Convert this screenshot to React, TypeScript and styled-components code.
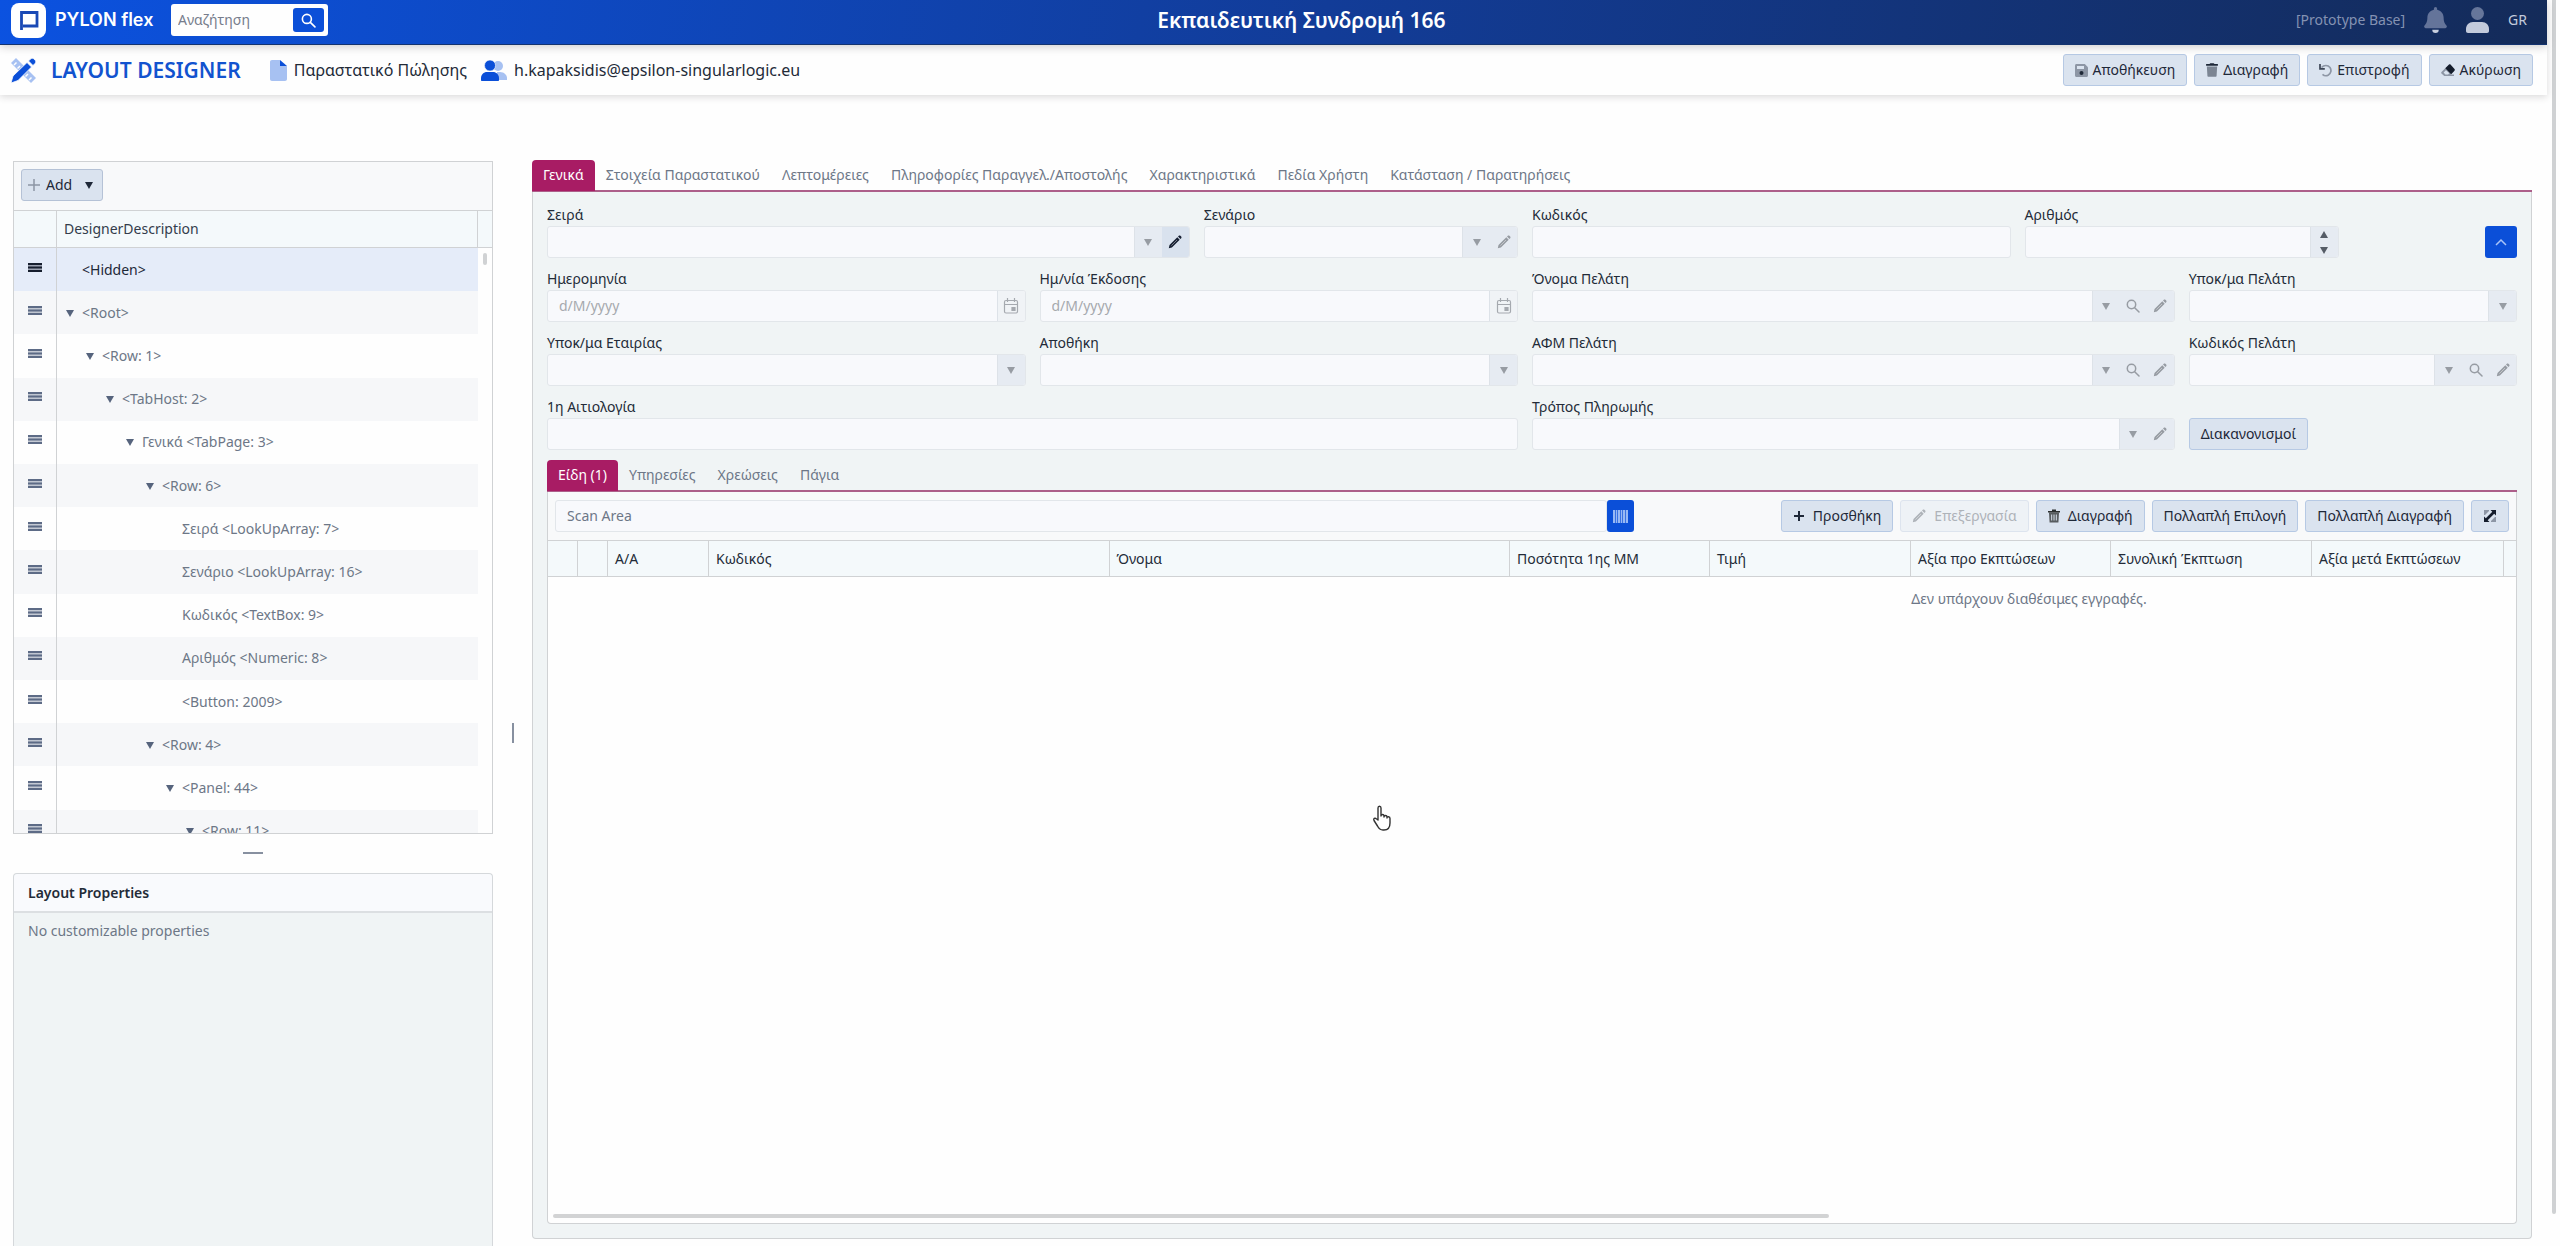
import React from "react";
import styled, { createGlobalStyle, css } from "styled-components";

const GlobalStyle = createGlobalStyle`
  *, *::before, *::after { box-sizing: border-box; }
  body {
    margin: 0;
    background: #fefefe;
    color: #232b38;
    font: 400 14px/20px "Noto Sans", "Open Sans", sans-serif;
    overflow: hidden;
  }
  button, input { font: inherit; color: inherit; }
  h1, h2, p { margin: 0; }
  svg { display: block; flex: none; }
`;

/* ---------- page frame ---------- */

const Page = styled.div`
  display: flex;
  height: 100vh;
`;

const Content = styled.div`
  flex: 1;
  min-width: 0;
  display: flex;
  flex-direction: column;
`;

const ScrollRail = styled.div`
  width: 13px;
  padding: 0 4px 32px 5px;
`;

const ScrollThumb = styled.div`
  height: 100%;
  border-radius: 0 0 2px 2px;
  background: #cfd1d3;
`;

const TopBar = styled.header`
  position: relative;
  z-index: 2;
  display: grid;
  grid-template-columns: 53fr auto 50fr;
  align-items: center;
  height: 45px;
  padding: 0 20px 4px 11px;
  border-bottom: 1px solid #14336f;
  background: linear-gradient(100deg, #0b52e0 0%, #123c98 52%, #142b59 100%);
  box-shadow: 0 2px 8px rgba(40, 30, 40, 0.22);
  color: #fff;
`;

const BarGroup = styled.div<{ $gap: number; $end?: boolean }>`
  display: flex;
  align-items: center;
  gap: ${(p) => p.$gap}px;
  justify-content: ${(p) => (p.$end ? "flex-end" : "flex-start")};
`;

const Brand = styled.a`
  display: flex;
  align-items: center;
  gap: 9px;
  width: 147px;
  color: #fff;
  font: 600 18px/24px Inter, sans-serif;
  text-decoration: none;
  white-space: nowrap;
`;

const SearchBox = styled.form`
  display: flex;
  align-items: center;
  width: 157px;
  height: 32px;
  padding: 0 4px 0 7px;
  border-radius: 3px;
  background: #fefefe;

  input {
    flex: 1;
    min-width: 0;
    padding: 0;
    border: 0;
    background: none;
    color: #232b38;
    outline: 0;
  }
  input::placeholder { color: #777d8c; }
  button {
    display: grid;
    place-items: center;
    width: 31px;
    height: 24px;
    padding: 0;
    border: 0;
    border-radius: 3px;
    background: #0b4fd8;
    color: #fff;
  }
`;

const BarTitle = styled.h1`
  font-size: 21px;
  line-height: 28px;
  font-weight: 600;
`;

const BaseName = styled.span`
  color: #8492b2;
`;

const IconButton = styled.button`
  display: grid;
  place-items: center;
  padding: 0;
  border: 0;
  background: none;
  color: #c3cbdc;
`;

const SubBar = styled.div`
  position: relative;
  z-index: 1;
  display: flex;
  align-items: center;
  height: 50px;
  padding: 0 14px 0 11px;
  background: #fefefe;
  box-shadow: 0 2px 7px rgba(40, 30, 40, 0.16);
`;

const DesignerTitle = styled.h2`
  margin: 0 29px 0 15px;
  color: #1253cf;
  font-size: 21px;
  line-height: 28px;
  font-weight: 600;
`;

const Crumb = styled.span`
  margin: 0 14px 0 7px;
  font-size: 16px;
  line-height: 22px;
  white-space: nowrap;
`;

const Actions = styled.div`
  display: flex;
  gap: 7px;
  margin-left: auto;
`;

const Button = styled.button<{ $pad?: number; $gap?: number }>`
  display: inline-flex;
  align-items: center;
  gap: ${(p) => p.$gap ?? 5}px;
  height: 32px;
  padding: 0 ${(p) => p.$pad ?? 11}px;
  border: 1px solid #b6c9e4;
  border-radius: 3px;
  background: #dae3ef;
  color: #1e2838;
  white-space: nowrap;

  &:disabled {
    border-color: #dde4ee;
    background: #eef2f6;
    color: #aeb3b9;
  }
`;

/* ---------- workspace ---------- */

const Workspace = styled.main`
  flex: 1;
  min-height: 0;
  display: grid;
  grid-template-columns: 480px 39px minmax(0, 1fr);
  padding: 66px 15px 0 13px;
`;

const LeftColumn = styled.div`
  display: flex;
  flex-direction: column;
  min-height: 0;
`;

const Splitter = styled.div<{ $vertical?: boolean }>`
  display: flex;
  align-items: center;
  justify-content: center;
  flex: none;
  height: ${(p) => (p.$vertical ? "auto" : "39px")};
  padding-top: ${(p) => (p.$vertical ? "58px" : "0")};

  &::before {
    content: "";
    width: ${(p) => (p.$vertical ? 2 : 20)}px;
    height: ${(p) => (p.$vertical ? 20 : 2)}px;
    background: #8790a0;
  }
`;

const TreePanel = styled.section`
  display: flex;
  flex-direction: column;
  height: 54vh;
  border: 1px solid #d0d2d4;
  overflow: hidden;
`;

const TreeToolbar = styled.div`
  flex: none;
  height: 49px;
  padding: 7px;
  border-bottom: 1px solid #d0d2d4;
  background: #f8f9fa;

  button { border-color: #b5c2d6; }
  svg:last-child { margin: 0 3px 0 7px; }
`;

const TreeBody = styled.div`
  display: flex;
  flex: 1;
  min-height: 0;
  overflow: hidden;
`;

const TreeTable = styled.table`
  flex: 1;
  height: 642px;
  border-collapse: separate;
  border-spacing: 0;
  table-layout: fixed;

  th, td { padding: 0; text-align: left; font-weight: 400; }
  th { height: 37px; background: #f4f9fb; border-bottom: 1px solid #d0d2d4; }
  th + th { padding-left: 7px; border-right: 1px solid #d0d2d4; color: #333c4b; }
  tr > :first-child { width: 43px; border-right: 1px solid #d0d2d4; }
`;

const TreeRow = styled.tr<{ $selected: boolean }>`
  color: ${(p) => (p.$selected ? "#1e2838" : "#6d7787")};
  background: ${(p) => (p.$selected ? "#e5ecf9" : "transparent")};
  ${(p) => !p.$selected && css`&:nth-child(even) { background: #f6f7f9; }`}

  td:first-child svg {
    margin: 0 auto 4px;
    color: ${(p) => (p.$selected ? "#161e2e" : "#5d6b86")};
  }
`;

const TreeNode = styled.div<{ $level: number }>`
  display: flex;
  align-items: center;
  height: 20px;
  padding-left: ${(p) => 9 + p.$level * 20}px;
  white-space: nowrap;
`;

const TreeArrow = styled.span`
  width: 16px;
  color: #56647d;
`;

const TreeScroll = styled.div`
  width: 14px;

  &::before {
    content: "";
    display: block;
    height: 37px;
    border-bottom: 1px solid #d0d2d4;
    background: #f4f9fb;
  }
  &::after {
    content: "";
    display: block;
    width: 4px;
    height: 12px;
    margin: 5px 5px;
    border-radius: 2px;
    background: #d0d2d4;
  }
`;

const Properties = styled.section`
  flex: 1;
  border: 1px solid #d5d8db;
  border-bottom: 0;
  border-radius: 4px 4px 0 0;
  background: #f0f4f5;

  h2 {
    height: 39px;
    padding: 0 14px;
    border-bottom: 2px solid #dcdfe2;
    border-radius: 4px 4px 0 0;
    background: #f9fafd;
    font-size: 14px;
    line-height: 38px;
    font-weight: 600;
  }
  p { padding: 8px 14px; color: #6d7787; }
`;

/* ---------- tabs ---------- */

const TabHost = styled.section<{ $outer?: boolean }>`
  display: flex;
  flex-direction: column;
  min-height: 0;
  min-width: 0;
  ${(p) => (p.$outer ? css`margin: -1px 0 7px;` : css`flex: 1; margin-top: 10px;`)}
`;

const TabBar = styled.div`
  display: flex;
  flex: none;
  height: 32px;
  border-bottom: 2px solid #ad5f8a;
`;

const Tab = styled.button<{ $active?: boolean }>`
  height: 31px;
  padding: 0 11px 1px;
  border: 0;
  border-radius: 4px 4px 0 0;
  background: ${(p) => (p.$active ? "#a81c64" : "transparent")};
  color: ${(p) => (p.$active ? "#fff" : "#6d7787")};
  white-space: nowrap;
`;

const TabPanel = styled.div<{ $outer?: boolean }>`
  flex: 1;
  min-height: 0;
  display: flex;
  flex-direction: column;
  border: 1px solid #d0d2d4;
  border-top: 0;
  border-radius: 0 0 4px 4px;
  background: ${(p) => (p.$outer ? "#f0f4f5" : "#fefefe")};
  ${(p) => p.$outer && css`padding: 12px 14px 14px;`}
`;

/* ---------- form ---------- */

const FormGrid = styled.form`
  display: grid;
  grid-template-columns: repeat(12, minmax(0, 1fr));
  row-gap: 10px;
`;

const Cell = styled.div<{ $span: number; $last?: boolean }>`
  grid-column: span ${(p) => p.$span};
  display: flex;
  flex-direction: column;
  justify-content: flex-end;
  align-items: ${(p) => (p.$span === 1 ? "flex-end" : "stretch")};
  padding-right: ${(p) => (p.$last ? 0 : 14)}px;

  label { height: 22px; line-height: 22px; }
  ${Button} { align-self: flex-start; }
`;

const InputBox = styled.div<{ $muted?: boolean }>`
  display: flex;
  height: 32px;
  border: 1px solid #e2e6ea;
  border-radius: 3px;
  background: #f8f9fc;
  overflow: hidden;

  input {
    flex: 1;
    min-width: 0;
    padding: 0 11px;
    border: 0;
    background: none;
    outline: 0;
  }
  input::placeholder { color: ${(p) => (p.$muted ? "#6d7787" : "#a6a9ae")}; opacity: 1; }
`;

const Triggers = styled.div<{ $light?: boolean }>`
  display: flex;
  border-left: 1px solid #dde2e8;
  background: ${(p) => (p.$light ? "#f0f3f6" : "#e6ebf2")};
`;

const Trigger = styled.button<{ $dark?: boolean }>`
  display: grid;
  place-items: center;
  width: 27px;
  padding: 0;
  border: 0;
  background: ${(p) => (p.$dark ? "#d9e2ee" : "transparent")};
  color: ${(p) => (p.$dark ? "#172033" : "#979ca3")};
`;

const Spinner = styled.div`
  display: flex;
  flex-direction: column;
  width: 27px;

  button { flex: 1; width: 27px; color: #555c66; }
`;

const PrimaryButton = styled.button<{ $narrow?: boolean }>`
  display: grid;
  place-items: center;
  width: ${(p) => (p.$narrow ? 27 : 32)}px;
  height: 32px;
  padding: 0;
  border: 0;
  border-radius: 3px;
  background: #0b4fd8;
  color: #a9c4f8;
`;

/* ---------- item grid ---------- */

const GridToolbar = styled.div`
  display: flex;
  flex: none;
  align-items: center;
  gap: 7px;
  height: 49px;
  padding: 0 7px;
  border-bottom: 1px solid #d0d2d4;
  background: #f8f9fa;
`;

const ScanGroup = styled.div`
  display: flex;
  width: calc(55% + 4px);

  ${InputBox} { flex: 1; }
`;

const ItemTable = styled.table`
  flex: none;
  width: 100%;
  border-collapse: separate;
  border-spacing: 0;
  table-layout: fixed;

  th {
    height: 36px;
    padding: 0 7px;
    border-right: 1px solid #d0d2d4;
    border-bottom: 1px solid #d0d2d4;
    background: #f4f9fb;
    text-align: left;
    font-weight: 400;
    white-space: nowrap;
  }
  th:last-child { border-right: 0; }
`;

const EmptyArea = styled.div`
  flex: 1;
  overflow: hidden;

  p {
    width: 150%;
    padding: 12px 0 0 10px;
    color: #6d7787;
    text-align: center;
  }
`;

const HScroll = styled.div`
  padding: 0 0 5px 5px;

  &::before {
    content: "";
    display: block;
    width: 65%;
    height: 4px;
    border-radius: 2px;
    background: #d2d3d4;
  }
`;

const HandCursor = styled.svg`
  position: absolute;
  left: 54%;
  top: 805px;
  transform: translateX(-10px);
`;

/* ---------- icons ---------- */

const Down = () => (
  <svg width="8" height="8" viewBox="0 0 8 8" fill="currentColor"><path d="M0 1h8L4 8z" /></svg>
);
const Up = () => (
  <svg width="8" height="8" viewBox="0 0 8 8" fill="currentColor"><path d="M0 7h8L4 0z" /></svg>
);
const Bars = () => (
  <svg width="14" height="10" viewBox="0 0 14 10" fill="currentColor">
    <path d="M0 0h14v9H0z" opacity=".35" />
    <path d="M0 0h14v2H0zM0 3.5h14v2H0zM0 7h14v2H0z" />
  </svg>
);
const Pencil = () => (
  <svg width="14" height="14" viewBox="0 0 14 14" fill="currentColor">
    <path d="M9.3 2.3l2.400 2.400-7.800 7.800-3.100.8.7-3.200zM10 1.600l.8-.8c.5-.5 1.100-.5 1.600 0l.8.8c.5.5.5 1.100 0 1.600l-.8.8z" />
    <path d="M3.400 10.600l5.600-5.600" stroke="#fff" strokeWidth=".7" opacity=".6" />
  </svg>
);
const Lens = ({ size = 14 }: { size?: number }) => (
  <svg width={size} height={size} viewBox="0 0 14 14" fill="none" stroke="currentColor" strokeWidth="1.5" strokeLinecap="round">
    <circle cx="5.5" cy="5.5" r="4.2" /><path d="M8.7 8.7l4.300 4.300" />
  </svg>
);
const Calendar = () => (
  <svg width="16" height="16" viewBox="0 0 16 16" fill="none" stroke="#a5a9af" strokeWidth="1.2">
    <rect x="1.5" y="2.5" width="13" height="12.5" rx="1.5" /><path d="M1.500 6.500h13M4.500 0v4M11.500 0v4" />
    <path d="M9 9.500h3v3H9z" fill="#a5a9af" />
  </svg>
);
const Trash = () => (
  <svg width="12" height="14" viewBox="0 0 448 512" fill="#1e2838">
    <path d="M432 32H312l-9.400-18.700A24 24 0 0 0 281.100 0H166.800a23.700 23.700 0 0 0-21.400 13.300L136 32H16A16 16 0 0 0 0 48v32a16 16 0 0 0 16 16h416a16 16 0 0 0 16-16V48a16 16 0 0 0-16-16z" />
    <path d="M53.200 467a48 48 0 0 0 47.900 45h245.800a48 48 0 0 0 47.900-45L416 128H32z" opacity=".5" />
  </svg>
);
const TrashLines = () => (
  <svg width="12" height="14" viewBox="0 0 12 14" fill="#2b2f2f">
    <path d="M0 2h12v1.500H0zM4 .5h4V2H4z" />
    <path d="M1 3.500h10l-.6 10H1.600z" opacity=".75" />
    <path d="M3.700 5.500v6M6 5.500v6M8.300 5.500v6" stroke="#dae3ef" />
  </svg>
);
const Save = () => (
  <svg width="13" height="13" viewBox="0 0 13 13">
    <path d="M1.500 0h8.300L13 3.200v8.300c0 .9-.6 1.500-1.500 1.500h-10C.6 13 0 12.400 0 11.500v-10C0 .6.600 0 1.500 0z" fill="#8d96a5" />
    <path d="M2 2h7v3H2z" fill="#dae3ef" /><circle cx="6.5" cy="9" r="2" fill="#1e2838" />
  </svg>
);
const Undo = () => (
  <svg width="13" height="13" viewBox="0 0 13 13" fill="none">
    <path d="M2.500 3.500C5 .8 9 .9 11 3.500c1.800 2.600.9 6-1.600 7.500-2 1.100-4.300.8-5.900-.7" stroke="#8d96a5" strokeWidth="1.7" />
    <path d="M1 0v4.800h4.800" stroke="#3c4656" strokeWidth="1.7" />
  </svg>
);
const Eraser = () => (
  <svg width="14" height="13" viewBox="0 0 14 13">
    <path d="M4.200 4.200L.5 7.900c-.5.500-.5 1.200 0 1.700L3.200 12H13v-1.500H9.500l.8-.8z" fill="#8d96a5" />
    <path d="M5 6.200L2.600 8.600l1.800 1.800h2.700l1.200-1.200z" fill="#dae3ef" />
    <path d="M8 .6L4.200 4.300l6 6 3.300-3.600c.5-.5.500-1.100 0-1.600L9.500.6C9 .1 8.500.1 8 .6z" fill="#151d2c" />
  </svg>
);
const Plus = ({ bold }: { bold?: boolean }) => (
  <svg width="12" height="12" viewBox="0 0 12 12" stroke={bold ? "#1e2838" : "#8d96a5"} strokeWidth={bold ? 2 : 1.5}>
    <path d={bold ? "M6 1v10M1 6h10" : "M6 0v12M0 6h12"} />
  </svg>
);
const Expand = () => (
  <svg width="14" height="14" viewBox="0 0 14 14">
    <path d="M1 1h5v1L2 6H1zM13 13H8v-1l4-4h1z" fill="#8d96a5" />
    <path d="M13 1v5.500l-1.800-1.800-6.500 6.500L6.500 13H1V7.500l1.800 1.800 6.500-6.500L7.500 1z" fill="#151d2c" />
  </svg>
);
const ChevronUp = () => (
  <svg width="12" height="8" viewBox="0 0 12 8" fill="none" stroke="currentColor" strokeWidth="1.5"><path d="M1 7l5-5 5 5" /></svg>
);
const Barcode = () => (
  <svg width="15" height="13" viewBox="0 0 15 13" fill="#a9c4f8">
    <path d="M0 0h2v13H0zM3 0h1v13H3zM5 0h2v13H5zM8 0h1v13H8zM10 0h2v13h-2zM13 0h2v13h-2z" opacity=".85" />
    <path d="M0 0h15v13H0z" opacity=".3" />
  </svg>
);
const Logo = () => (
  <svg width="35" height="35" viewBox="0 0 35 35">
    <rect width="35" height="35" rx="8" fill="#fff" />
    <path d="M10.500 27V9.500h15.500V23H12" fill="none" stroke="#1a49b5" strokeWidth="2.8" />
  </svg>
);
const Bell = () => (
  <svg width="23" height="26" viewBox="0 0 448 512">
    <path d="M439.400 362.300c-19.300-20.800-55.500-52-55.500-154.300 0-77.700-54.500-139.900-127.900-155.200V32a32 32 0 1 0-64 0v20.800C118.600 68.100 64.100 130.300 64.100 208c0 102.300-36.200 133.500-55.500 154.300C2.600 368.700 0 376.400 0 384c.1 16.400 13 32 32.100 32h383.800c19.100 0 32-15.600 32.100-32 0-7.600-2.700-15.300-8.600-21.700z" fill="#64749a" />
    <path d="M160 448a64 64 0 0 0 128 0z" fill="#c8cfdf" />
  </svg>
);
const User = () => (
  <svg width="23" height="26" viewBox="0 0 23 26">
    <circle cx="11.5" cy="6.5" r="6.5" fill="#66769a" />
    <path d="M0 24v-2c0-4 3-7 7-7h9c4 0 7 3 7 7v2c0 1-.8 2-2 2H2c-1.200 0-2-1-2-2z" fill="#c3cbdc" />
  </svg>
);
const Designer = () => (
  <svg width="25" height="25" viewBox="0 0 25 25">
    <path d="M5 0L0 5l20 20 5-5z" fill="#a7c1f2" />
    <path d="M3 7l2.500-2.500M6.500 10.500L9 8M14.500 18.500L17 16M18 22l2.500-2.500" stroke="#fefefe" strokeWidth="1.5" />
    <path d="M16 4.500l4.500 4.500L7 22.500 0 25l2-7zM17.500 3l2-2c1-1 2.500-1 3.500 0l1 1c1 1 1 2.500 0 3.500l-2 2z" fill="#0b4fd8" stroke="#fefefe" strokeWidth=".8" />
  </svg>
);
const Doc = () => (
  <svg width="17" height="21" viewBox="0 0 17 21">
    <path d="M2 0h8v6h7v13c0 1.200-.8 2-2 2H2c-1.200 0-2-.8-2-2V2C0 .8.800 0 2 0z" fill="#a7c1f2" /><path d="M10 0l7 6h-7z" fill="#0b4fd8" />
  </svg>
);
const People = () => (
  <svg width="26" height="21" viewBox="0 0 26 21">
    <circle cx="17" cy="6" r="5" fill="#a7c1f2" /><path d="M16 12h3c4 0 7 3 7 6v2H16z" fill="#a7c1f2" />
    <circle cx="9" cy="5.5" r="5.5" fill="#0b4fd8" stroke="#fefefe" strokeWidth=".6" />
    <path d="M0 20v-2c0-3.300 2.700-6 6-6h6c3.300 0 6 2.700 6 6v2c0 .6-.4 1-1 1H1c-.6 0-1-.4-1-1z" fill="#0b4fd8" />
  </svg>
);

/* ---------- composed parts ---------- */

type TriggerKind = "down" | "lens" | "pencil" | "pencilDark" | "date" | "spin";

const triggerIcon = (kind: TriggerKind) => {
  if (kind === "down") return <Down />;
  if (kind === "lens") return <Lens />;
  if (kind === "date") return <Calendar />;
  return <Pencil />;
};

interface FieldProps {
  id: string;
  label: string;
  span: number;
  last?: boolean;
  placeholder?: string;
  triggers?: TriggerKind[];
}

const Field = ({ id, label, span, last, placeholder, triggers = [] }: FieldProps) => (
  <Cell $span={span} $last={last}>
    <label htmlFor={id}>{label}</label>
    <InputBox>
      <input id={id} type="text" placeholder={placeholder} />
      {triggers.length > 0 && (
        <Triggers $light={triggers[0] === "date"}>
          {triggers.map((kind) =>
            kind === "spin" ? (
              <Spinner key={kind}>
                <Trigger type="button"><Up /></Trigger>
                <Trigger type="button"><Down /></Trigger>
              </Spinner>
            ) : (
              <Trigger key={kind} type="button" $dark={kind === "pencilDark"}>{triggerIcon(kind)}</Trigger>
            )
          )}
        </Triggers>
      )}
    </InputBox>
  </Cell>
);

const treeRows: { text: string; level: number; leaf?: boolean }[] = [
  { text: "<Hidden>", level: 0, leaf: true },
  { text: "<Root>", level: 0 },
  { text: "<Row: 1>", level: 1 },
  { text: "<TabHost: 2>", level: 2 },
  { text: "Γενικά <TabPage: 3>", level: 3 },
  { text: "<Row: 6>", level: 4 },
  { text: "Σειρά <LookUpArray: 7>", level: 5, leaf: true },
  { text: "Σενάριο <LookUpArray: 16>", level: 5, leaf: true },
  { text: "Κωδικός <TextBox: 9>", level: 5, leaf: true },
  { text: "Αριθμός <Numeric: 8>", level: 5, leaf: true },
  { text: "<Button: 2009>", level: 5, leaf: true },
  { text: "<Row: 4>", level: 4 },
  { text: "<Panel: 44>", level: 5 },
  { text: "<Row: 11>", level: 6 },
];

const mainTabs = [
  "Γενικά",
  "Στοιχεία Παραστατικού",
  "Λεπτομέρειες",
  "Πληροφορίες Παραγγελ./Αποστολής",
  "Χαρακτηριστικά",
  "Πεδία Χρήστη",
  "Κατάσταση / Παρατηρήσεις",
];

const itemTabs = ["Είδη (1)", "Υπηρεσίες", "Χρεώσεις", "Πάγια"];

const columns: [string, string][] = [
  ["", "30px"],
  ["", "30px"],
  ["Α/Α", "101px"],
  ["Κωδικός", "auto"],
  ["Όνομα", "auto"],
  ["Ποσότητα 1ης ΜΜ", "200px"],
  ["Τιμή", "201px"],
  ["Αξία προ Εκπτώσεων", "200px"],
  ["Συνολική Έκπτωση", "201px"],
  ["Αξία μετά Εκπτώσεων", "192px"],
  ["", "12px"],
];

const Tabs = ({ names }: { names: string[] }) => (
  <TabBar role="tablist">
    {names.map((name, i) => (
      <Tab key={name} type="button" role="tab" aria-selected={i === 0} $active={i === 0}>{name}</Tab>
    ))}
  </TabBar>
);

export default function App() {
  return (
    <Page>
      <GlobalStyle />
      <Content>
        <TopBar>
          <BarGroup $gap={13}>
            <Brand href="#"><Logo />PYLON flex</Brand>
            <SearchBox>
              <input type="search" aria-label="Αναζήτηση" placeholder="Αναζήτηση" />
              <button type="button" aria-label="Αναζήτηση"><Lens size={15} /></button>
            </SearchBox>
          </BarGroup>
          <BarTitle>Εκπαιδευτική Συνδρομή 166</BarTitle>
          <BarGroup $gap={19} $end>
            <BaseName>[Prototype Base]</BaseName>
            <IconButton type="button"><Bell /></IconButton>
            <IconButton type="button"><User /></IconButton>
            <IconButton type="button">GR</IconButton>
          </BarGroup>
        </TopBar>

        <SubBar>
          <Designer />
          <DesignerTitle>LAYOUT DESIGNER</DesignerTitle>
          <Doc />
          <Crumb>Παραστατικό Πώλησης</Crumb>
          <People />
          <Crumb>h.kapaksidis@epsilon-singularlogic.eu</Crumb>
          <Actions>
            <Button type="button"><Save />Αποθήκευση</Button>
            <Button type="button"><Trash />Διαγραφή</Button>
            <Button type="button"><Undo />Επιστροφή</Button>
            <Button type="button"><Eraser />Ακύρωση</Button>
          </Actions>
        </SubBar>

        <Workspace>
          <LeftColumn>
            <TreePanel>
              <TreeToolbar>
                <Button type="button" $pad={6} $gap={6}><Plus />Add<Down /></Button>
              </TreeToolbar>
              <TreeBody>
                <TreeTable>
                  <thead>
                    <tr><th /><th>DesignerDescription</th></tr>
                  </thead>
                  <tbody>
                    {treeRows.map((row, i) => (
                      <TreeRow key={row.text} $selected={i === 0}>
                        <td><Bars /></td>
                        <td>
                          <TreeNode $level={row.level}>
                            <TreeArrow>{!row.leaf && <Down />}</TreeArrow>
                            {row.text}
                          </TreeNode>
                        </td>
                      </TreeRow>
                    ))}
                  </tbody>
                </TreeTable>
                <TreeScroll />
              </TreeBody>
            </TreePanel>
            <Splitter />
            <Properties>
              <h2>Layout Properties</h2>
              <p>No customizable properties</p>
            </Properties>
          </LeftColumn>

          <Splitter $vertical />

          <TabHost $outer>
            <Tabs names={mainTabs} />
            <TabPanel $outer>
              <FormGrid>
                <Field id="series" label="Σειρά" span={4} triggers={["down", "pencilDark"]} />
                <Field id="scenario" label="Σενάριο" span={2} triggers={["down", "pencil"]} />
                <Field id="code" label="Κωδικός" span={3} />
                <Field id="number" label="Αριθμός" span={2} triggers={["spin"]} />
                <Cell $span={1} $last>
                  <PrimaryButton type="button" aria-label="Σύμπτυξη"><ChevronUp /></PrimaryButton>
                </Cell>

                <Field id="date" label="Ημερομηνία" span={3} placeholder="d/M/yyyy" triggers={["date"]} />
                <Field id="issued" label="Ημ/νία Έκδοσης" span={3} placeholder="d/M/yyyy" triggers={["date"]} />
                <Field id="customer" label="Όνομα Πελάτη" span={4} triggers={["down", "lens", "pencil"]} />
                <Field id="customer-branch" label="Υποκ/μα Πελάτη" span={2} last triggers={["down"]} />

                <Field id="company-branch" label="Υποκ/μα Εταιρίας" span={3} triggers={["down"]} />
                <Field id="warehouse" label="Αποθήκη" span={3} triggers={["down"]} />
                <Field id="vat" label="ΑΦΜ Πελάτη" span={4} triggers={["down", "lens", "pencil"]} />
                <Field id="customer-code" label="Κωδικός Πελάτη" span={2} last triggers={["down", "lens", "pencil"]} />

                <Field id="reason" label="1η Αιτιολογία" span={6} />
                <Field id="payment" label="Τρόπος Πληρωμής" span={4} triggers={["down", "pencil"]} />
                <Cell $span={2} $last>
                  <Button type="button">Διακανονισμοί</Button>
                </Cell>
              </FormGrid>

              <TabHost>
                <Tabs names={itemTabs} />
                <TabPanel>
                  <GridToolbar>
                    <ScanGroup>
                      <InputBox $muted>
                        <input type="text" aria-label="Scan Area" placeholder="Scan Area" />
                      </InputBox>
                      <PrimaryButton type="button" $narrow aria-label="Barcode"><Barcode /></PrimaryButton>
                    </ScanGroup>
                    <Actions>
                      <Button type="button" $gap={8}><Plus bold />Προσθήκη</Button>
                      <Button type="button" $gap={8} disabled><Pencil />Επεξεργασία</Button>
                      <Button type="button" $gap={8}><TrashLines />Διαγραφή</Button>
                      <Button type="button">Πολλαπλή Επιλογή</Button>
                      <Button type="button">Πολλαπλή Διαγραφή</Button>
                      <Button type="button" aria-label="Πλήρης οθόνη"><Expand /></Button>
                    </Actions>
                  </GridToolbar>
                  <ItemTable>
                    <colgroup>
                      {columns.map(([, width], i) => <col key={i} style={{ width }} />)}
                    </colgroup>
                    <thead>
                      <tr>{columns.map(([name], i) => <th key={i}>{name}</th>)}</tr>
                    </thead>
                  </ItemTable>
                  <EmptyArea><p>Δεν υπάρχουν διαθέσιμες εγγραφές.</p></EmptyArea>
                  <HScroll />
                </TabPanel>
              </TabHost>
            </TabPanel>
          </TabHost>
        </Workspace>
      </Content>
      <ScrollRail><ScrollThumb /></ScrollRail>

      <HandCursor width="20" height="26" viewBox="0 0 20 26" fill="#fff" stroke="#333" strokeWidth="1.4" strokeLinejoin="round">
        <path d="M6 15V3c0-2.400 3-2.400 3 0v8c0-2 3-2 3 0v1c0-2 3-2 3 0v1c0-2 3-1.600 3 .4V18c0 4-2 7-6 7h-1c-3 0-4.500-2-5.500-4L2 15.500c-1-2 1-3 2.300-1.700z" />
      </HandCursor>
    </Page>
  );
}
